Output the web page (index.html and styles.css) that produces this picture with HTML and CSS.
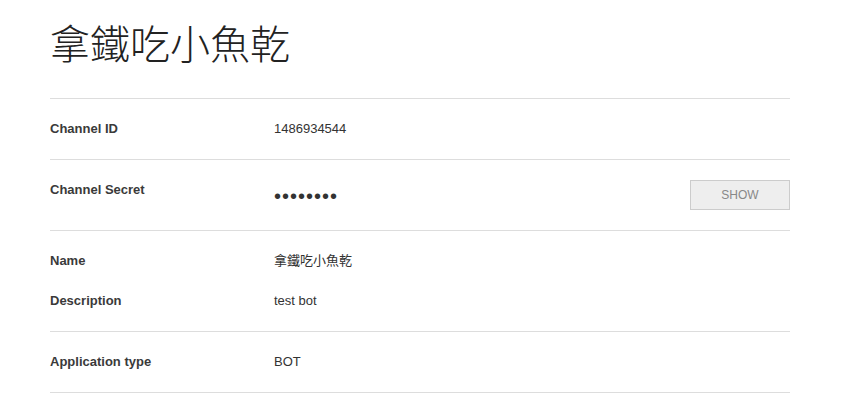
FILE: index.html
```html
<!DOCTYPE html>
<html>
<head>
<meta charset="utf-8">
<link rel="stylesheet" href="styles.css">
</head>
<body>
<div class="page">
  <h1 class="title">拿鐵吃小魚乾</h1>
  <div class="section">
    <div class="row">
      <div class="label">Channel ID</div>
      <div class="value">1486934544</div>
    </div>
  </div>
  <div class="section">
    <div class="row secret-row">
      <div class="label">Channel Secret</div>
      <div class="value dots">••••••••</div>
      <button class="btn">SHOW</button>
    </div>
  </div>
  <div class="section stack">
    <div class="row">
      <div class="label">Name</div>
      <div class="value">拿鐵吃小魚乾</div>
    </div>
    <div class="row">
      <div class="label">Description</div>
      <div class="value">test bot</div>
    </div>
  </div>
  <div class="section">
    <div class="row">
      <div class="label">Application type</div>
      <div class="value">BOT</div>
    </div>
  </div>
</div>
</body>
</html>
```
FILE: styles.css
```css
html, body {
  margin: 0;
  padding: 0;
  background: #fff;
}
body {
  font-family: "Liberation Sans", Arial, "Noto Sans CJK TC", sans-serif;
  color: #333;
  font-size: 13px;
}
.page {
  width: 740px;
  margin-left: 50px;
}
.title {
  margin: 0;
  height: 99px;
  box-sizing: border-box;
  padding-top: 19px;
  font-family: "Noto Sans CJK TC", sans-serif;
  font-weight: 300;
  font-size: 40px;
  line-height: 46px;
  color: #222;
  border-bottom: 1px solid #ddd;
}
.section {
  padding: 20px 0;
  border-bottom: 1px solid #ddd;
  display: flex;
  flex-direction: column;
  gap: 20px;
}
.row {
  display: flex;
  align-items: flex-start;
  line-height: 20px;
}
.label {
  width: 224px;
  font-weight: bold;
  color: #3a3a3a;
}
.value {
  flex: 1;
  color: #333;
}
.dots {
  font-size: 20px;
  line-height: 20px;
  padding-top: 6px;
  letter-spacing: 1px;
  color: #333;
}
.btn {
  width: 100px;
  height: 30px;
  background: #eee;
  border: 1px solid #ccc;
  color: #888;
  font-family: "Liberation Sans", Arial, sans-serif;
  font-size: 12px;
  padding: 0;
  margin: 0;
  border-radius: 0;
}
```
